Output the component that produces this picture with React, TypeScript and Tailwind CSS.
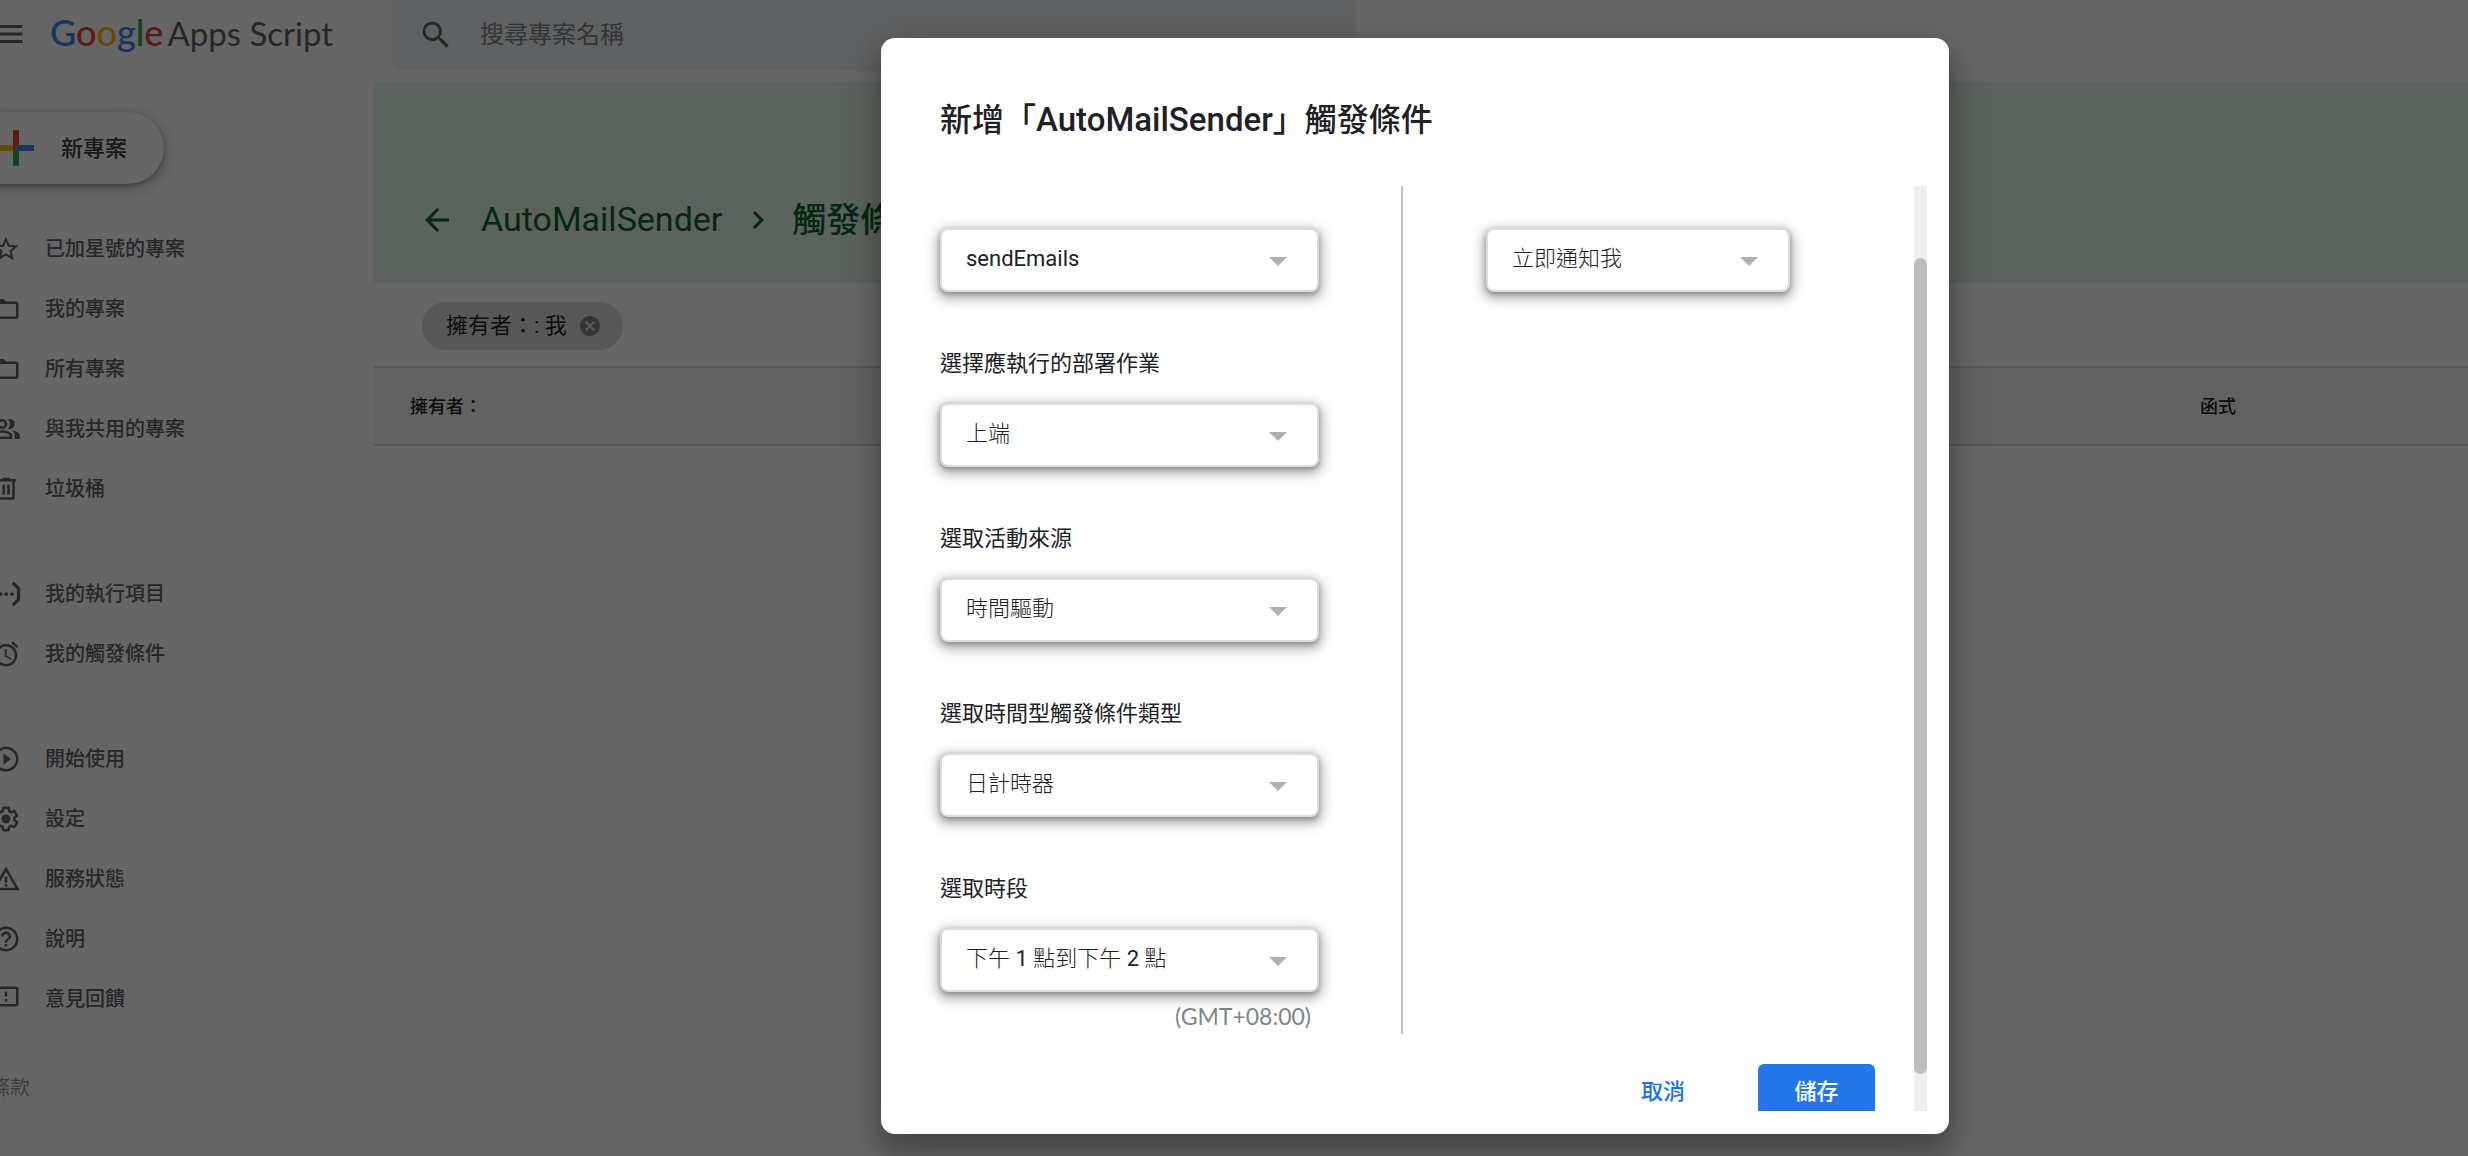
import type { ReactNode } from 'react';
import {
  MdAlarm,
  MdArrowBack,
  MdCancel,
  MdChevronRight,
  MdFolderOpen,
  MdHelpOutline,
  MdMenu,
  MdOutlineFeedback,
  MdOutlinePeopleAlt,
  MdPlayCircleOutline,
  MdSearch,
  MdStarBorder,
  MdWarningAmber,
} from 'react-icons/md';

function TrashIcon() {
  return (
    <svg viewBox="0 0 24 24" className="size-[30px]" fill="none" stroke="currentColor" strokeWidth="2" aria-hidden="true">
      <path d="M4 5h16M9 4h6M6 5v13.5a1 1 0 0 0 1 1h10a1 1 0 0 0 1-1V5" />
      <path d="M10.2 8.5v8M14 8.5v8" />
    </svg>
  );
}

function ExecutionsIcon() {
  return (
    <svg viewBox="0 0 24 24" className="size-[30px] overflow-visible" fill="none" stroke="currentColor" strokeWidth="2.6" aria-hidden="true">
      <path d="M17.5 3l4.5 4.5v9L17.5 21M6.5 3L2 7.5v9L6.5 21" />
      <g fill="currentColor" stroke="none">
        <circle cx="7.6" cy="12" r="1.5" />
        <circle cx="12.2" cy="12" r="1.5" />
        <circle cx="16.8" cy="12" r="1.5" />
      </g>
    </svg>
  );
}

function GearIcon() {
  return (
    <svg viewBox="0 0 24 24" className="size-[30px]" aria-hidden="true">
      <path
        transform="translate(1.2 1.2) scale(.9)"
        fill="none"
        stroke="currentColor"
        strokeWidth="2.2"
        strokeLinejoin="round"
        d="M19.43 12.98c.04-.32.07-.64.07-.98 0-.34-.03-.66-.07-.98l2.11-1.65c.19-.15.24-.42.12-.64l-2-3.46a.5.5 0 0 0-.61-.22l-2.49 1c-.52-.4-1.08-.73-1.69-.98l-.38-2.65A.488.488 0 0 0 14 2h-4c-.25 0-.46.18-.49.42l-.38 2.65c-.61.25-1.17.59-1.69.98l-2.49-1a.566.566 0 0 0-.18-.03c-.17 0-.34.09-.43.25l-2 3.46c-.13.22-.07.49.12.64l2.11 1.65c-.04.32-.07.65-.07.98 0 .33.03.66.07.98l-2.11 1.65c-.19.15-.24.42-.12.64l2 3.46a.5.5 0 0 0 .61.22l2.49-1c.52.4 1.08.73 1.69.98l.38 2.65c.03.24.24.42.49.42h4c.25 0 .46-.18.49-.42l.38-2.65c.61-.25 1.17-.59 1.69-.98l2.49 1c.06.02.12.03.18.03.17 0 .34-.09.43-.25l2-3.46c.12-.22.07-.49-.12-.64l-2.11-1.65z"
      />
      <circle cx="12" cy="12" r="3.6" fill="currentColor" />
    </svg>
  );
}

function PlusIcon() {
  return (
    <svg viewBox="6 6 24 24" className="size-9 shrink-0" aria-hidden="true">
      <path fill="#34A853" d="M16 16v14h4V20z" />
      <path fill="#4285F4" d="M30 16H20l-4 4h14z" />
      <path fill="#FBBC05" d="M6 16v4h10l4-4z" />
      <path fill="#EA4335" d="M20 16V6h-4v14z" />
    </svg>
  );
}

type NavEntry = { label: string; icon: ReactNode };

const navGroups: NavEntry[][] = [
  [
    { label: '已加星號的專案', icon: <MdStarBorder size={30} /> },
    { label: '我的專案', icon: <MdFolderOpen size={30} /> },
    { label: '所有專案', icon: <MdFolderOpen size={30} /> },
    { label: '與我共用的專案', icon: <MdOutlinePeopleAlt size={30} /> },
    { label: '垃圾桶', icon: <TrashIcon /> },
  ],
  [
    { label: '我的執行項目', icon: <ExecutionsIcon /> },
    { label: '我的觸發條件', icon: <MdAlarm size={30} /> },
  ],
  [
    { label: '開始使用', icon: <MdPlayCircleOutline size={30} /> },
    { label: '設定', icon: <GearIcon /> },
    { label: '服務狀態', icon: <MdWarningAmber size={30} /> },
    { label: '說明', icon: <MdHelpOutline size={30} /> },
    { label: '意見回饋', icon: <MdOutlineFeedback size={30} /> },
  ],
];

function Logo() {
  return (
    <a href="#" className="flex items-baseline gap-1 whitespace-nowrap font-['Lato','Noto_Sans_CJK_TC',sans-serif] leading-[48px]">
      <span className="text-[36px] font-medium">
        <span className="text-[#4285f4]">G</span>
        <span className="text-[#ea4335]">o</span>
        <span className="text-[#fbbc05]">o</span>
        <span className="text-[#4285f4]">g</span>
        <span className="text-[#34a853]">l</span>
        <span className="text-[#ea4335]">e</span>
      </span>
      <span className="text-[33px] text-[#5f6368]">Apps Script</span>
    </a>
  );
}

function Sidebar() {
  return (
    <aside className="w-[374px] shrink-0">
      <button
        type="button"
        className="-ml-10 mt-[30px] flex h-[72px] w-[204px] items-center gap-[27px] rounded-full bg-white pl-[38px] text-[22px] font-medium text-[#3c4043] shadow-[0_2px_4px_rgba(60,64,67,0.4),0_4px_14px_4px_rgba(60,64,67,0.2)]"
      >
        <PlusIcon />
        新專案
      </button>
      <nav className="mt-[35px] flex flex-col gap-[45px]">
        {navGroups.map((group) => (
          <ul key={group[0].label}>
            {group.map((entry) => (
              <li key={entry.label}>
                <a href="#" className="-ml-[9px] flex h-[60px] items-center gap-6 text-[20px] font-medium text-[#5f6368]">
                  {entry.icon}
                  {entry.label}
                </a>
              </li>
            ))}
          </ul>
        ))}
      </nav>
      <a href="#" className="-ml-[10px] mt-[44px] block text-[20px] leading-[30px] text-[#9aa0a6]">
        條款
      </a>
    </aside>
  );
}

type FieldProps = { id: string; label?: string; name: string; value: string };

function Field({ id, label, name, value }: FieldProps) {
  return (
    <div className="flex flex-col gap-[23px]">
      {label && (
        <label htmlFor={id} className="text-[22px] leading-8 text-[#202124]">
          {label}
        </label>
      )}
      <div className="relative">
        <select
          id={id}
          aria-label={label ? undefined : name}
          defaultValue={value}
          className="block h-16 w-full appearance-none rounded-lg border-2 border-[#dadce0] bg-white pb-1 pl-6 pr-16 font-['Roboto','Noto_Sans_CJK_TC_Light','Noto_Sans_CJK_TC',sans-serif] text-[22px] text-[#202124] shadow-[0_2px_4px_rgba(60,64,67,0.35),0_4px_12px_3px_rgba(60,64,67,0.42)]"
        >
          <option>{value}</option>
        </select>
        <svg viewBox="0 0 18 9" className="pointer-events-none absolute right-8 top-[29px] h-[9px] w-[18px]" fill="#b0b0b0" aria-hidden="true">
          <path d="M0 0h18L9 9z" />
        </svg>
      </div>
    </div>
  );
}

function TriggerDialog() {
  return (
    <section
      role="dialog"
      aria-modal="true"
      aria-labelledby="dialog-title"
      className="flex h-[1096px] w-[1068px] flex-col rounded-[14px] bg-white pb-[23px] pl-[59px] pr-[22px] pt-[58px] shadow-[0_18px_22px_2px_rgba(0,0,0,0.18),0_12px_40px_4px_rgba(0,0,0,0.18)]"
    >
      <h2 id="dialog-title" className="text-[32px] font-medium leading-[48px] text-[#202124]">
        新增「<span className="text-[33px]">AutoMailSender</span>」觸發條件
      </h2>
      <div className="mt-[42px] flex min-h-0 grow justify-between">
        <div className="-ml-6 box-content flex w-[935px] flex-col overflow-hidden pl-6">
          <div className="flex shrink-0">
            <div className="flex h-[848px] w-[463px] flex-col gap-14 border-r-2 border-[#bdc1c6] pr-[82px] pt-[42px]">
              <Field id="fn" name="選擇您要執行的功能" value="sendEmails" />
              <Field id="deploy" name="deploy" label="選擇應執行的部署作業" value="上端" />
              <Field id="source" name="source" label="選取活動來源" value="時間驅動" />
              <Field id="kind" name="kind" label="選取時間型觸發條件類型" value="日計時器" />
              <div className="flex flex-col gap-2">
                <Field id="slot" name="slot" label="選取時段" value="下午 1 點到下午 2 點" />
                <p className="pr-2 text-right font-['Lato',sans-serif] text-[23px] leading-8 text-[#80868b]">(GMT+08:00)</p>
              </div>
            </div>
            <div className="w-[387px] pl-[83px] pt-[42px]">
              <Field id="notify" name="錯誤通知設定" value="立即通知我" />
            </div>
          </div>
          <div className="mt-[30px] flex shrink-0 justify-end gap-[37px] text-[22px] font-medium">
            <button type="button" className="h-[54px] px-9 text-[#1a73e8]">
              取消
            </button>
            <button type="button" className="h-[54px] w-[117px] rounded-md bg-[#2276e8] text-white">
              儲存
            </button>
          </div>
        </div>
        <div className="flex w-[13px] flex-col bg-[#eeeeee] pt-[72px]">
          <div className="h-[816px] rounded-full bg-[#bdbdbd]" />
        </div>
      </div>
    </section>
  );
}

export default function App() {
  return (
    <div className="relative h-screen min-h-[1156px] overflow-hidden bg-white font-['Roboto','Noto_Sans_CJK_TC',sans-serif]" lang="zh-Hant">
      <header className="flex h-[82px] items-start">
        <div className="flex w-[392px] shrink-0 items-start">
          <button type="button" aria-label="主選單" className="-ml-[9px] mr-[23px] mt-4 text-[#5f6368]">
            <MdMenu size={36} />
          </button>
          <div className="mt-2">
            <Logo />
          </div>
        </div>
        <label className="flex h-[71px] w-[964px] items-center gap-[26px] rounded-b-md bg-[#f1f3f4] pb-0.5 pl-[26px]">
          <MdSearch size={36} className="text-[#5f6368]" />
          <input
            type="search"
            aria-label="搜尋專案名稱"
            placeholder="搜尋專案名稱"
            className="grow bg-transparent text-[24px] outline-none placeholder:text-[#80868b]"
          />
        </label>
      </header>
      <div className="flex">
        <Sidebar />
        <main className="min-w-0 grow">
          <div className="flex h-[201px] items-end bg-[#e6f4ea] pb-[39px] pl-[45px] text-[34px] leading-[48px] text-[#0d652d]">
            <div className="flex h-12 items-center">
              <button type="button" aria-label="返回">
                <MdArrowBack size={36} />
              </button>
              <a href="#" className="ml-[26px] pb-0.5">
                AutoMailSender
              </a>
              <MdChevronRight size={36} className="ml-[18px] mr-4" />
              <h1 className="font-medium">觸發條件</h1>
            </div>
          </div>
          <div className="flex h-[83px] items-center pl-12 pt-0.5">
            <span className="flex h-12 items-center gap-[11px] rounded-full bg-[#dcdcdc] pl-6 pr-[21px] text-[22px] text-[#202124]">
              擁有者：: 我
              <button type="button" aria-label="移除篩選條件" className="text-[#80868b]">
                <MdCancel size={24} />
              </button>
            </span>
          </div>
          <table className="w-full border-y-2 border-[#dcdcdc] bg-[#f5f5f5] text-left text-[18px] text-[#202124]">
            <thead>
              <tr className="h-[78px]">
                <th scope="col" className="pl-9 font-medium">
                  擁有者：
                </th>
                <th scope="col" className="w-[268px] font-medium">
                  函式
                </th>
              </tr>
            </thead>
          </table>
        </main>
      </div>
      <div className="absolute inset-0 flex items-start justify-center bg-black/60 pl-[362px] pt-[38px]">
        <TriggerDialog />
      </div>
    </div>
  );
}
